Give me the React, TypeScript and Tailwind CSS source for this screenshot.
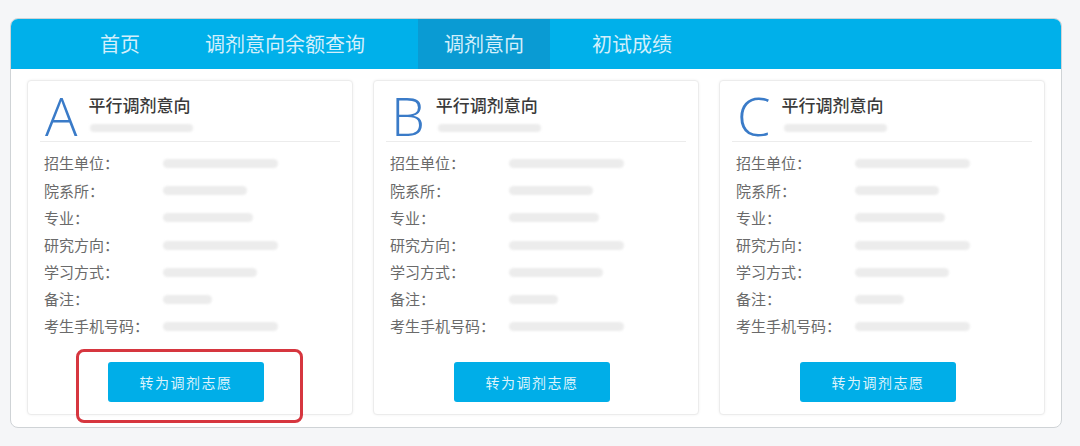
const cjk = { fontFamily: '"Noto Sans CJK SC", "Noto Sans", sans-serif' };

const tabs = [
  { label: "首页", cls: "pl-[89px] pr-[65px]" },
  { label: "调剂意向余额查询", cls: "pr-[53px]" },
  { label: "调剂意向", cls: "px-[26px] bg-[#0a9bd3]" },
  { label: "初试成绩", cls: "pl-[42px]" },
];

const rows = [
  { label: "招生单位：", w: "w-[115px]" },
  { label: "院系所：", w: "w-[84px]" },
  { label: "专业：", w: "w-[90px]" },
  { label: "研究方向：", w: "w-[115px]" },
  { label: "学习方式：", w: "w-[94px]" },
  { label: "备注：", w: "w-[49px]" },
  { label: "考生手机号码：", w: "w-[115px]" },
];

function Card({ letter, marked }: { letter: string; marked?: boolean }) {
  return (
    <div className="relative w-[326px] rounded-[4px] border border-[#ececec] bg-white pt-2 pb-3 shadow-[0_0_3px_rgba(0,0,0,0.06)]">
      {/* Header */}
      <div className="mx-3 flex items-start border-b border-[#ececec] pl-[5px]">
        <div
          className="h-[52px] text-[54px] leading-[52px] font-light text-[#3a7bc8]"
          style={{ fontFamily: '"Open Sans", "Liberation Sans", sans-serif' }}
        >
          {letter}
        </div>
        <div className="ml-[11px] mt-1">
          <div className="text-[17px] leading-6 font-medium text-[#3a3a3a]">平行调剂意向</div>
          <div className="mt-[7px] ml-[2px] h-[8px] w-[103px] rounded-full bg-[#ececec] blur-[1px]" />
        </div>
      </div>

      {/* Fields */}
      <div className="mt-2 pl-4">
        {rows.map((r) => (
          <div key={r.label} className="flex h-[27.2px] items-center">
            <div className="w-[119px] text-[15px] text-[#6a6a6a]">{r.label}</div>
            <div className={`h-[9px] ${r.w} rounded-full bg-[#ececec] blur-[1px]`} />
          </div>
        ))}
      </div>

      <button className="mt-[22px] ml-[80px] h-10 w-[156px] rounded-[3px] bg-[#00aee8] text-[14px] tracking-[1.5px] text-[#dff4fc]">
        转为调剂志愿
      </button>

      {marked && (
        <div className="absolute left-[48px] top-[268px] h-[74px] w-[227px] rounded-[8px] border-[3px] border-[#d6363f]" />
      )}
    </div>
  );
}

export default function App() {
  return (
    <div className="h-[446px] w-[1080px] bg-[#f5f6f8] pt-[18px] pl-[10px]" style={cjk}>
      <div className="w-[1052px] overflow-hidden rounded-[8px] border border-[#cfd3d6] bg-white">
        {/* Nav */}
        <div className="flex h-[50px] bg-[#00b0ea]">
          {tabs.map((t) => (
            <div key={t.label} className={`flex items-center text-[20px] text-[#d3effb] ${t.cls}`}>
              {t.label}
            </div>
          ))}
        </div>

        {/* Cards */}
        <div className="flex gap-5 px-4 pt-[11px] pb-3">
          <Card letter="A" marked />
          <Card letter="B" />
          <Card letter="C" />
        </div>
      </div>
    </div>
  );
}
